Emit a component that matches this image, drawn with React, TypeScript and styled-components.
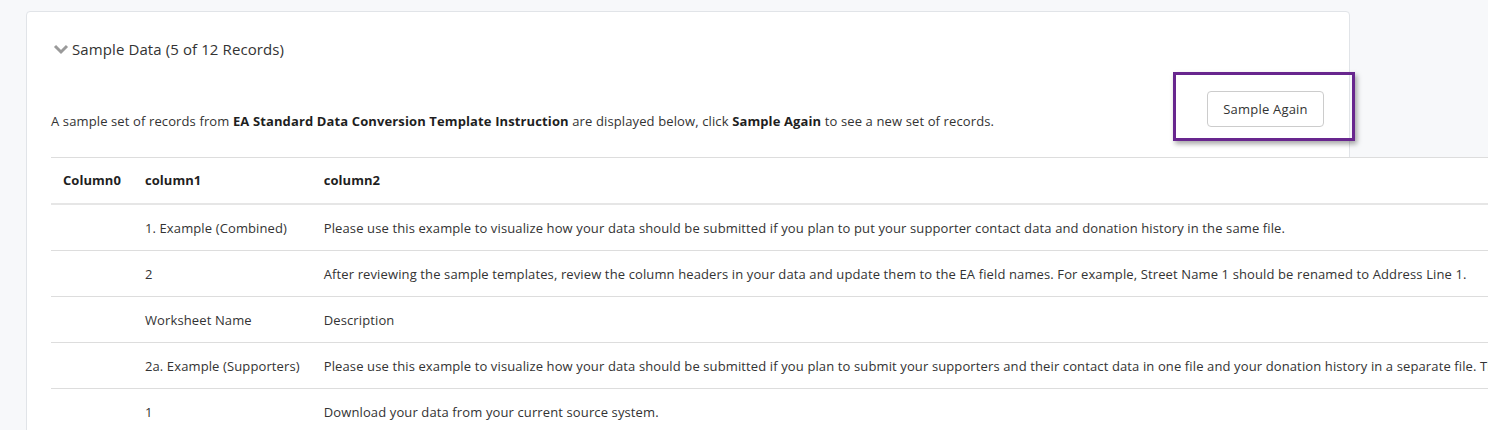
import React from "react";
import styled, { createGlobalStyle } from "styled-components";

const FONT = `"Open Sans", "Noto Sans", Arial, sans-serif`;

const GlobalStyle = createGlobalStyle`
  html, body {
    margin: 0;
    padding: 0;
    background: #f7f8fa;
    overflow: hidden;
    font-family: ${FONT};
    color: #333;
  }
`;

const Page = styled.div`
  padding: 11px 0 0 26px;
  width: 1324px;
  height: 419px;
`;

const Card = styled.section`
  position: relative;
  background: #fff;
  border: 1px solid #e1e4e8;
  border-radius: 4px;
  padding: 0 25px 0 24px;
  height: 440px;
`;

const Header = styled.div`
  display: flex;
  align-items: center;
  gap: 3px;
  height: 74px;
  font-size: 15px;
  letter-spacing: 0.1px;
  color: #333;
`;

const Toolbar = styled.div`
  display: flex;
  justify-content: space-between;
  align-items: flex-end;
  padding-top: 5px;
`;

const Desc = styled.p`
  margin: 0;
  font-size: 13px;
  line-height: 20px;
  letter-spacing: 0.12px;
  b { font-weight: 700; color: #1f1f1f; }
`;

const Button = styled.button`
  font-family: ${FONT};
  font-size: 13px;
  letter-spacing: 0.2px;
  color: #333;
  background: #fff;
  border: 1px solid #ccc;
  border-radius: 4px;
  height: 36px;
  width: 117px;
  margin-bottom: 4px;
  cursor: pointer;
`;

const Highlight = styled.div`
  position: absolute;
  left: 1146px;
  top: 60px;
  width: 176px;
  height: 63px;
  border: 3px solid #68268e;
  box-shadow: 2px 3px 5px rgba(0, 0, 0, 0.35);
  pointer-events: none;
`;

const Table = styled.table`
  margin-top: 26px;
  border-collapse: collapse;
  background: #fff;
  white-space: nowrap;
  font-size: 13px;
  letter-spacing: 0.12px;
  min-width: 1437px;
  position: relative;
  z-index: 1;
`;

const Th = styled.th<{ $w?: number }>`
  text-align: left;
  font-weight: 700;
  color: #1f1f1f;
  padding: 12px 12px 13px;
  line-height: 20px;
  letter-spacing: 0.05px;
  border-top: 1px solid #ddd;
  border-bottom: 2px solid #e6e6e6;
  width: ${(p) => (p.$w ? `${p.$w - 24}px` : "auto")};
`;

const Td = styled.td`
  padding: 13px 12px 12px;
  line-height: 20px;
  color: #333;
  border-bottom: 1px solid #ddd;
`;

const Chevron = () => (
  <svg width="16" height="12" viewBox="0 0 16 12" style={{ marginLeft: 2 }}>
    <path d="M2 3 L8 9 L14 3" fill="none" stroke="#9a9a9a" strokeWidth="3" />
  </svg>
);

const rows: [string, string, string][] = [
  ["", "1. Example (Combined)", "Please use this example to visualize how your data should be submitted if you plan to put your supporter contact data and donation history in the same file."],
  ["", "2", "After reviewing the sample templates, review the column headers in your data and update them to the EA field names. For example, Street Name 1 should be renamed to Address Line 1."],
  ["", "Worksheet Name", "Description"],
  ["", "2a. Example (Supporters)", "Please use this example to visualize how your data should be submitted if you plan to submit your supporters and their contact data in one file and your donation history in a separate file. There"],
  ["", "1", "Download your data from your current source system."],
];

export default function App() {
  return (
    <>
      <GlobalStyle />
      <Page>
        <Card>
          <Header>
            <Chevron />
            <span>Sample Data (5 of 12 Records)</span>
          </Header>
          <Toolbar>
            <Desc>
              A sample set of records from <b>EA Standard Data Conversion Template Instruction</b> are displayed below, click <b>Sample Again</b> to see a new set of records.
            </Desc>
            <Button>Sample Again</Button>
          </Toolbar>
          <Highlight />
          <Table>
            <thead>
              <tr>
                <Th $w={84}>Column0</Th>
                <Th $w={178}>column1</Th>
                <Th>column2</Th>
              </tr>
            </thead>
            <tbody>
              {rows.map((r, i) => (
                <tr key={i}>
                  <Td>{r[0]}</Td>
                  <Td>{r[1]}</Td>
                  <Td>{r[2]}</Td>
                </tr>
              ))}
            </tbody>
          </Table>
        </Card>
      </Page>
    </>
  );
}
